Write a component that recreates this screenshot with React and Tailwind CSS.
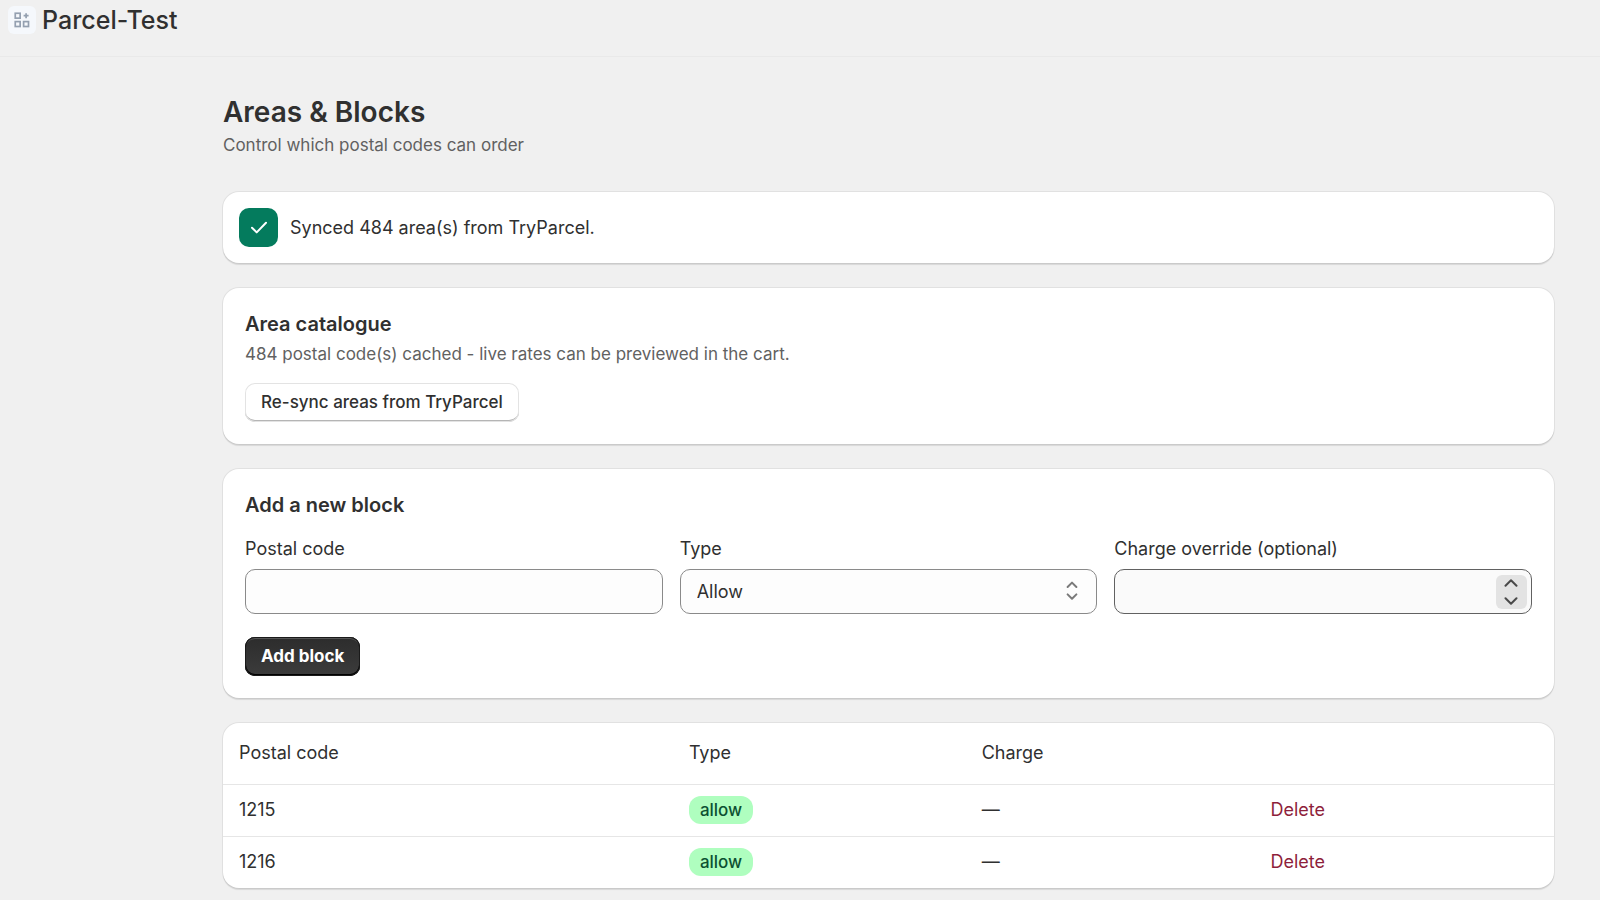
import React, { useState } from "react";

const rows = [
  { code: "1215", type: "allow", charge: "—" },
  { code: "1216", type: "allow", charge: "—" },
];

const cardClass =
  "bg-white rounded-2xl shadow-[0_0_0_1px_rgba(0,0,0,0.06),0_2px_1px_rgba(0,0,0,0.1)]";

const fieldClass =
  "w-full h-[45px] px-4 rounded-[10px] border border-[#8a8a8a] bg-[#fdfdfd] text-lg text-[#303030] focus:outline-none";

function AppIcon() {
  return (
    <span className="w-7 h-7 rounded-md bg-[#f5f8fc] flex items-center justify-center">
      <svg
        width="16"
        height="16"
        viewBox="0 0 16 16"
        fill="none"
        stroke="#94a0b0"
        strokeWidth="1.7"
      >
        <rect x="1.25" y="1.25" width="4.9" height="4.9" />
        <rect x="1.25" y="9.6" width="4.9" height="4.9" />
        <rect x="9.6" y="9.6" width="4.9" height="4.9" />
        <path d="M12.1 1.2v5M9.6 3.7h5" />
      </svg>
    </span>
  );
}

function Chevron({ up }) {
  return (
    <svg
      width="14"
      height="8"
      viewBox="0 0 14 8"
      fill="none"
      stroke="currentColor"
      strokeWidth="2"
      strokeLinecap="round"
      strokeLinejoin="round"
    >
      <path d={up ? "M1.5 6.7 7 1.3l5.5 5.4" : "M1.5 1.3 7 6.7l5.5-5.4"} />
    </svg>
  );
}

export default function App() {
  const [postalCode, setPostalCode] = useState("");
  const [type, setType] = useState("allow");
  const [charge, setCharge] = useState("");

  const step = (amount) => setCharge(String(Number(charge || 0) + amount));

  return (
    <div className="min-h-screen bg-[#f0f0f0] font-[Inter,sans-serif] text-[#303030]">
      {/* Top bar */}
      <header className="h-[57px] border-b border-[#e9e9e9] px-2 pt-1.5 flex items-start gap-1.5">
        <AppIcon />
        <span className="text-[25px] leading-7 font-medium">Parcel-Test</span>
      </header>

      <main className="pl-[223px] pr-[46px] pt-[39px] pb-3">
        <h1 className="text-[28px] leading-8 font-semibold">
          Areas &amp; Blocks
        </h1>
        <p className="mt-[5px] text-[17px] leading-6 text-[#616161]">
          Control which postal codes can order
        </p>

        <div className="mt-[35px] flex flex-col gap-[25px]">
          {/* Sync status */}
          <div
            className={`${cardClass} h-[71px] px-4 flex items-center gap-3`}
            role="status"
          >
            <span className="w-[39px] h-[39px] rounded-[10px] bg-[#047b5d] flex items-center justify-center">
              <svg
                width="18"
                height="14"
                viewBox="0 0 18 14"
                fill="none"
                stroke="#fff"
                strokeWidth="2"
                strokeLinecap="round"
                strokeLinejoin="round"
              >
                <path d="M2 6.8 6.7 11.4 16 1.8" />
              </svg>
            </span>
            <p className="text-lg">Synced 484 area(s) from TryParcel.</p>
          </div>

          {/* Area catalogue */}
          <section className={`${cardClass} p-[22px]`}>
            <h2 className="text-xl leading-7 font-semibold">Area catalogue</h2>
            <p className="mt-1 text-[17px] leading-6 text-[#616161]">
              484 postal code(s) cached - live rates can be previewed in the
              cart.
            </p>
            <button className="mt-[17px] h-[39px] px-4 rounded-[10px] bg-white text-[17px] font-medium shadow-[inset_0_0_0_1px_#e3e3e3,inset_0_-2px_0_#b5b5b5]">
              Re-sync areas from TryParcel
            </button>
          </section>

          {/* Add block */}
          <section className={`${cardClass} p-[22px]`}>
            <h2 className="text-xl leading-7 font-semibold">Add a new block</h2>
            <div className="mt-[18px] grid grid-cols-3 gap-[17px]">
              <div>
                <label htmlFor="postal" className="block text-lg leading-6 mb-2">
                  Postal code
                </label>
                <input
                  id="postal"
                  type="text"
                  value={postalCode}
                  onChange={(e) => setPostalCode(e.target.value)}
                  className={fieldClass}
                />
              </div>
              <div>
                <label htmlFor="type" className="block text-lg leading-6 mb-2">
                  Type
                </label>
                <div className="relative">
                  <select
                    id="type"
                    value={type}
                    onChange={(e) => setType(e.target.value)}
                    className={`${fieldClass} appearance-none`}
                  >
                    <option value="allow">Allow</option>
                    <option value="block">Block</option>
                  </select>
                  <svg
                    className="absolute right-[19px] top-3 pointer-events-none"
                    width="12"
                    height="20"
                    viewBox="0 0 12 20"
                    fill="none"
                    stroke="#7a7a7a"
                    strokeWidth="2"
                    strokeLinecap="round"
                    strokeLinejoin="round"
                  >
                    <path d="M1.6 6 6 1.6 10.4 6M1.6 13.4 6 17.8l4.4-4.4" />
                  </svg>
                </div>
              </div>
              <div>
                <label htmlFor="charge" className="block text-lg leading-6 mb-2">
                  Charge override (optional)
                </label>
                <div className="flex items-center w-full h-[45px] pr-1 rounded-[10px] border border-[#616161] bg-[#fafafa]">
                  <input
                    id="charge"
                    type="number"
                    value={charge}
                    onChange={(e) => setCharge(e.target.value)}
                    className="flex-1 min-w-0 px-4 text-lg bg-transparent focus:outline-none [appearance:textfield] [&::-webkit-inner-spin-button]:appearance-none"
                  />
                  <div className="w-[31px] h-[34px] rounded-md bg-[#e3e3e3] text-[#4a4a4a] flex flex-col justify-between py-1">
                    <button
                      aria-label="Increase"
                      onClick={() => step(1)}
                      className="flex justify-center"
                    >
                      <Chevron up />
                    </button>
                    <button
                      aria-label="Decrease"
                      onClick={() => step(-1)}
                      className="flex justify-center"
                    >
                      <Chevron />
                    </button>
                  </div>
                </div>
              </div>
            </div>
            <button className="mt-[23px] h-[39px] px-4 rounded-[10px] bg-linear-to-b from-[#2c2c2c] to-[#3c3c3c] text-white text-[17px] font-bold shadow-[inset_0_0_0_1px_#1a1a1a,inset_0_-1px_0_1px_#000,inset_0_2px_0_#555]">
              Add block
            </button>
          </section>

          {/* Existing blocks */}
          <div className={`${cardClass} overflow-hidden`}>
            <table className="w-full table-fixed text-left text-lg leading-6">
              <thead>
                <tr className="h-[61px]">
                  <th className="w-[33.8%] px-4 font-normal">Postal code</th>
                  <th className="w-[22%] px-4 font-normal">Type</th>
                  <th className="w-[21.7%] px-4 font-normal">Charge</th>
                  <th className="px-4"></th>
                </tr>
              </thead>
              <tbody>
                {rows.map((row) => (
                  <tr key={row.code} className="h-[52px] border-t border-[#e6e6e6]">
                    <td className="px-4">{row.code}</td>
                    <td className="px-4">
                      <span className="inline-block px-[11px] py-0.5 rounded-xl bg-[#affebf] text-[#0c5132] text-[17px] leading-6 font-medium">
                        {row.type}
                      </span>
                    </td>
                    <td className="px-4">{row.charge}</td>
                    <td className="px-4">
                      <button className="text-[#8e1f3b]">Delete</button>
                    </td>
                  </tr>
                ))}
              </tbody>
            </table>
          </div>
        </div>
      </main>
    </div>
  );
}
